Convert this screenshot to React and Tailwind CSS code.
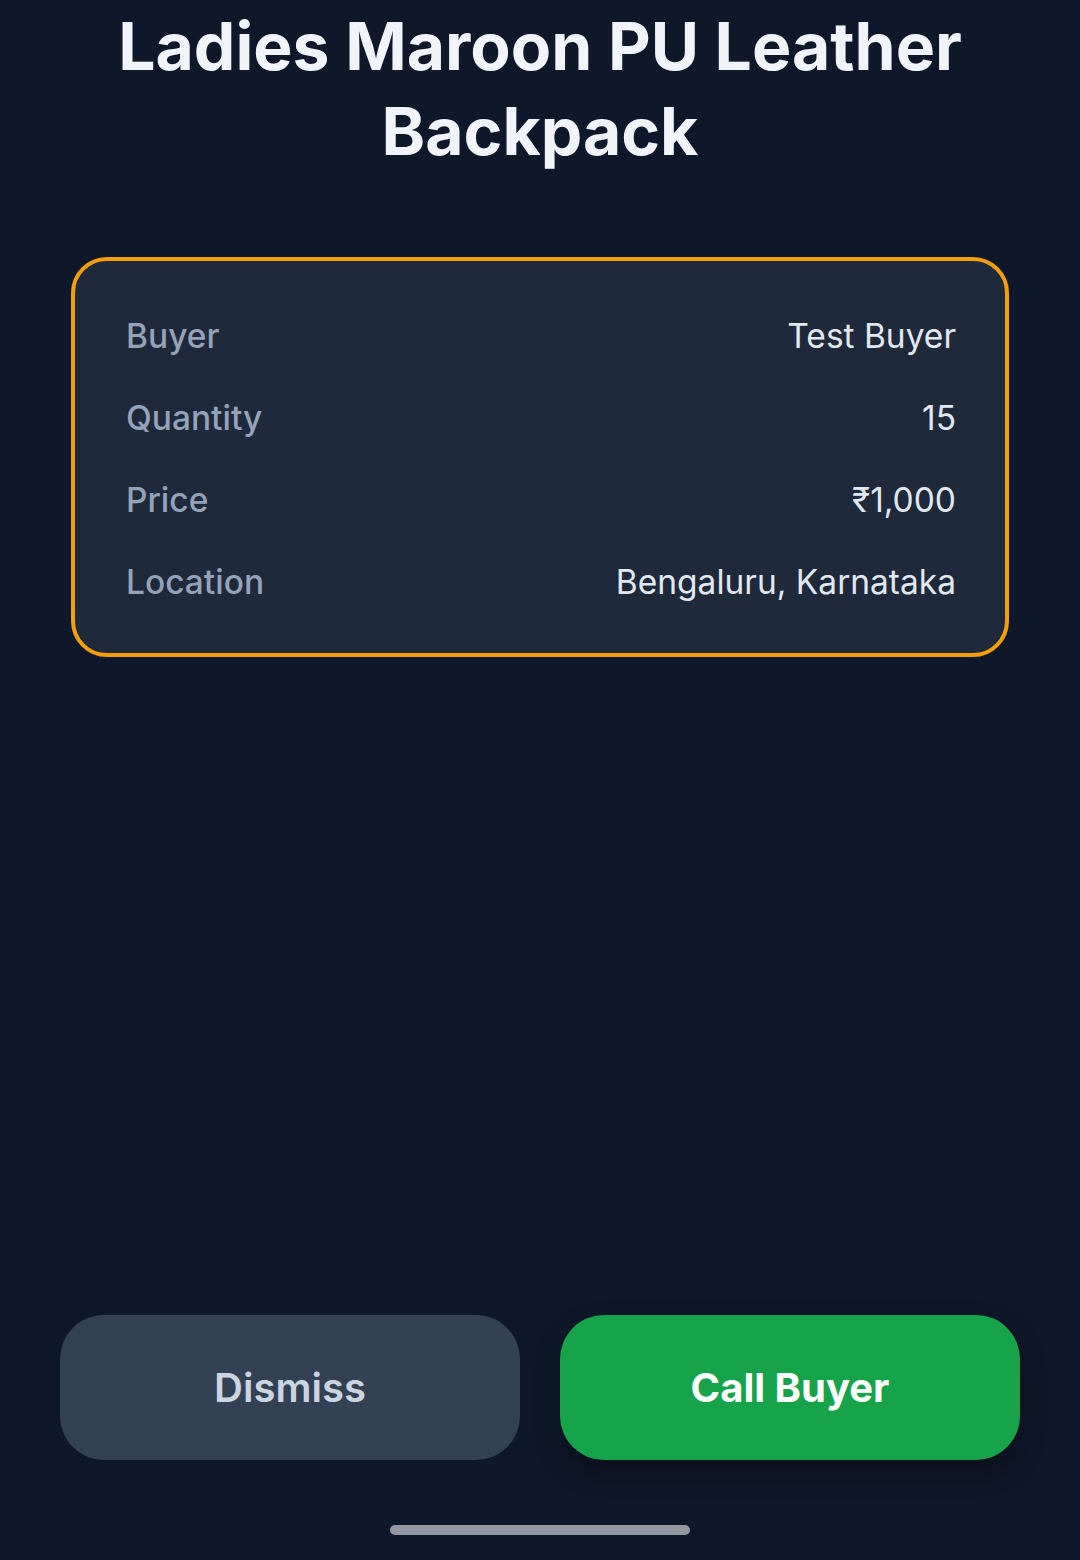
export default function App() {
  const rows = [
    ["Buyer", "Test Buyer"],
    ["Quantity", "15"],
    ["Price", "₹1,000"],
    ["Location", "Bengaluru, Karnataka"],
  ];
  return (
    <div
      className="w-[1080px] h-[1560px] bg-[#0f172a] flex flex-col overflow-hidden"
      style={{ fontFamily: "Inter, 'Noto Sans', sans-serif" }}
    >
      <h1 className="text-center text-[66px] leading-[85px] font-bold text-[#f1f5f9] px-[40px] pt-[4px]">
        Ladies Maroon PU Leather Backpack
      </h1>
      <div className="mx-[71px] mt-[83px] border-[4px] border-[#f59e0b] rounded-[36px] bg-[#1e293b] pl-[51px] pr-[49px] pt-[34px] pb-[30px] flex flex-col">
        {rows.map(([k, v]) => (
          <div key={k} className="flex justify-between items-center h-[82px]">
            <span className="text-[33.5px] font-medium text-[#94a3b8]">{k}</span>
            <span className="text-[33.5px] text-[#e2e8f0]">{v}</span>
          </div>
        ))}
      </div>
      <div className="flex-1" />
      <div className="flex gap-[40px] px-[60px]">
        <button className="flex-1 h-[145px] rounded-[44px] bg-[#334155] text-[#cbd5e1] text-[40px] font-semibold">
          Dismiss
        </button>
        <button className="flex-1 h-[145px] rounded-[44px] bg-[#16a34a] text-white text-[40px] font-bold shadow-[0_12px_24px_rgba(0,0,0,0.35)]">
          Call Buyer
        </button>
      </div>
      <div className="h-[65px]" />
      <div className="mx-auto w-[300px] h-[10px] rounded-full bg-[#94979f]" />
      <div className="h-[25px]" />
    </div>
  );
}
